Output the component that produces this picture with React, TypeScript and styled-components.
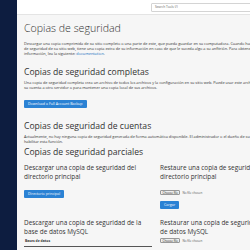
import React from "react";
import styled, { createGlobalStyle } from "styled-components";

const Global = createGlobalStyle`
  html, body { margin: 0; padding: 0; overflow: hidden; }
  body { font-family: "Open Sans", "Liberation Sans", sans-serif; background: #f6f6f6; color: #333; font-size: 4px; }
`;

const Shell = styled.div`
  display: flex;
  width: 250px;
  height: 250px;
  overflow: hidden;
`;

const Sidebar = styled.div`
  flex: 0 0 17px;
  background: #0d1d40;
`;

const Main = styled.div`
  flex: 0 0 auto;
  display: flex;
  flex-direction: column;
`;

const TopBar = styled.div`
  height: 14px;
  background: #fff;
  border-bottom: 1px solid #e4e4e4;
  display: flex;
  align-items: center;
  padding-left: 134px;
`;

const Search = styled.div`
  width: 110px;
  height: 9px;
  border: 1px solid #d4d4d4;
  border-radius: 1px;
  background: #fff;
  font-size: 3.2px;
  color: #666;
  display: flex;
  align-items: center;
  padding-left: 3px;
  box-sizing: border-box;
`;

const Content = styled.div`
  width: 320px;
  padding: 6px 0 0 7px;
`;

const Title = styled.h1`
  margin: 0 0 6px;
  font-size: 10.6px;
  font-weight: 300;
  line-height: 14px;
  color: #333;
`;

const H2 = styled.h2`
  margin: 0 0 2px;
  font-size: 8.6px;
  font-weight: 400;
  line-height: 12px;
  color: #333;
`;

const P = styled.p`
  margin: 0;
  font-size: 3.85px;
  line-height: 5px;
  color: #333;
  white-space: nowrap;
`;

const Link = styled.a`
  color: #1a6fbf;
`;

const Section = styled.div<{ $gap?: number }>`
  margin-top: ${(p) => p.$gap ?? 0}px;
`;

const BlueButton = styled.div`
  display: flex;
  align-items: center;
  width: max-content;
  height: 8px;
  padding: 0 4px;
  background: #2b82d4;
  color: #fff;
  font-size: 3.6px;
  line-height: 8px;
  border-radius: 1px;
`;

const Columns = styled.div`
  display: grid;
  grid-template-columns: 136px 150px;
  margin-top: 5px;
`;

const Col = styled.div``;

const H3 = styled.h3<{ $mb: number }>`
  margin: 0 0 ${(p) => p.$mb}px;
  width: 132px;
  font-size: 6.4px;
  font-weight: 400;
  line-height: 9px;
  color: #333;
`;

const FileRow = styled.div`
  display: flex;
  align-items: center;
  gap: 2px;
  height: 5px;
  font-size: 3px;
  color: #555;
`;

const ChooseBtn = styled.span`
  display: inline-flex;
  align-items: center;
  height: 5px;
  padding: 0 1.5px;
  border: 0.5px solid #999;
  background: #eee;
  border-radius: 1px;
  color: #222;
  box-sizing: border-box;
`;

const Label = styled.div`
  font-size: 3.4px;
  line-height: 5px;
  font-weight: 700;
  color: #333;
  margin: 2px 0 3px 1px;
`;

const TableHead = styled.div`
  width: 128px;
  border-top: 1px solid #555;
`;

export default function App() {
  return (
    <>
      <Global />
      <Shell>
        <Sidebar />
        <Main>
          <TopBar>
            <Search>Search Tools (/)</Search>
          </TopBar>
          <Content>
            <Title>Copias de seguridad</Title>
            <P>
              Descargar una copia comprimida de su sitio completo o una parte de este, que pueda guardar en su computadora. Cuando hace una copia
              <br />
              de seguridad de su sitio web, tiene una copia extra de su información en caso de que le suceda algo a su anfitrión. Para obtener más
              <br />
              información, lea la siguiente: <Link>documentation</Link>.
            </P>
            <Section $gap={10}>
              <H2>Copias de seguridad completas</H2>
              <P>
                Una copia de seguridad completa crea un archivo de todos los archivos y la configuración en su sitio web. Puede usar este archivo para mover
                <br />
                su cuenta a otro servidor o para mantener una copia local de sus archivos.
              </P>
              <Section $gap={10}>
                <BlueButton>Download a Full Account Backup</BlueButton>
              </Section>
            </Section>
            <Section $gap={12}>
              <H2>Copias de seguridad de cuentas</H2>
              <P>
                Actualmente, no hay ninguna copia de seguridad generada de forma automática disponible. El administrador o el dueño de su cuenta debe
                <br />
                habilitar esta función.
              </P>
            </Section>
            <Section $gap={2}>
              <H2>Copias de seguridad parciales</H2>
            </Section>
            <Columns>
              <Col>
                <H3 $mb={9}>Descargar una copia de seguridad del directorio principal</H3>
                <BlueButton>Directorio principal</BlueButton>
                <Section $gap={20}>
                  <H3 $mb={0}>Descargar una copia de seguridad de la base de datos MySQL</H3>
                  <Label>Bases de datos</Label>
                  <TableHead />
                </Section>
              </Col>
              <Col>
                <H3 $mb={9}>Restaure una copia de seguridad del directorio principal</H3>
                <FileRow>
                  <ChooseBtn>Choose file</ChooseBtn>
                  No file chosen
                </FileRow>
                <Section $gap={6}>
                  <BlueButton>Cargar</BlueButton>
                </Section>
                <Section $gap={9}>
                  <H3 $mb={2}>Restaurar una copia de seguridad de la base de datos MySQL</H3>
                  <FileRow>
                    <ChooseBtn>Choose file</ChooseBtn>
                    No file chosen
                  </FileRow>
                </Section>
              </Col>
            </Columns>
          </Content>
        </Main>
      </Shell>
    </>
  );
}
